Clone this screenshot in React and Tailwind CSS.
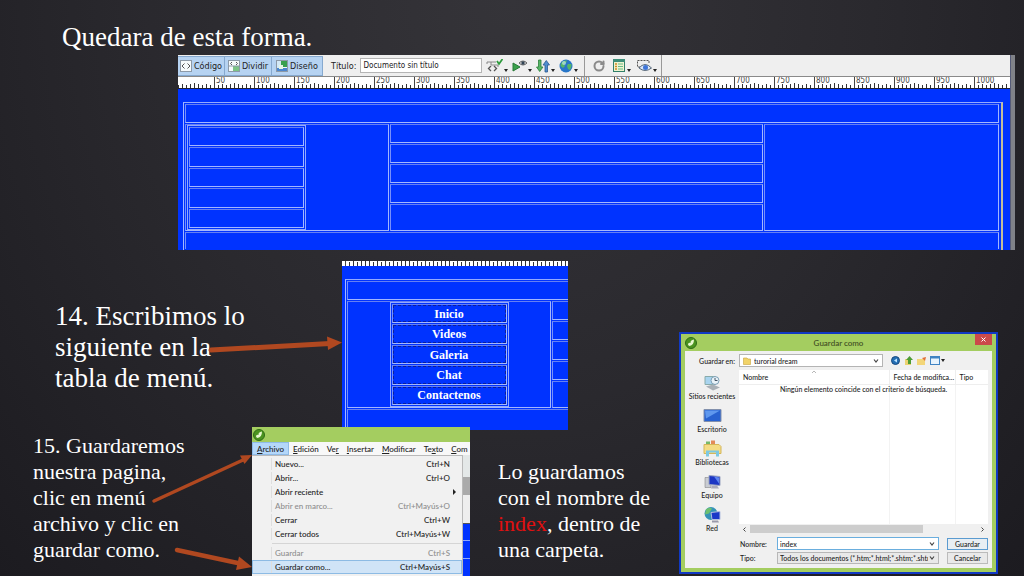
import React from 'react';
import { RotateCw } from 'lucide-react';

const RULER_LABELS = Array.from({ length: 20 }, (_, i) => (i + 1) * 50);
const MENU_BAR = [
    ['', 'A', 'rchivo'],
    ['', 'E', 'dición'],
    ['Ve', 'r', ''],
    ['', 'I', 'nsertar'],
    ['', 'M', 'odificar'],
    ['Te', 'x', 'to'],
    ['', 'C', 'om'],
];
const FILE_MENU = [
    { label: 'Nuevo...', keys: 'Ctrl+N' },
    { label: 'Abrir...', keys: 'Ctrl+O' },
    { label: 'Abrir reciente', submenu: true },
    { label: 'Abrir en marco...', keys: 'Ctrl+Mayús+O', disabled: true },
    { label: 'Cerrar', keys: 'Ctrl+W' },
    { label: 'Cerrar todos', keys: 'Ctrl+Mayús+W' },
    { separator: true },
    { label: 'Guardar', keys: 'Ctrl+S', disabled: true },
    { label: 'Guardar como...', keys: 'Ctrl+Mayús+S', active: true },
];

/* Ruler ticks: one every 5 units, longer on 25 and 50 */
const Ticks = ({ id, start }) => (
    <svg className="block w-full h-3 shrink-0" aria-hidden="true">
        <defs>
            <pattern id={id} x={start} y="0" width="40" height="12" patternUnits="userSpaceOnUse">
                <path d="M0.5 0V12" stroke="#444" />
                <path d="M4.5 8V12M8.5 7V12M12.5 8V12M16.5 7V12M20.5 6V12M24.5 7V12M28.5 8V12M32.5 7V12M36.5 8V12" stroke="#333" />
            </pattern>
        </defs>
        <rect width="100%" height="12" fill={`url(#${id})`} />
    </svg>
);

const Cell = ({ className = '', children }) => (
    <div className={`border border-t-[#6680f2] border-l-[#7890fa] border-b-[#a3b7ff] border-r-[#a3b7ff] ${className}`}>{children}</div>
);

/* Page layout shown in design view */
const PageDesign = ({ items, centered }) => (
    <div className="border border-b-0 border-t-[#94aaff] border-l-[#a3b7ff] border-r-2 border-r-[#c4bf9c] p-px pr-0.5 flex flex-col gap-px h-full">
        <Cell className="h-[19px] shrink-0" />
        <div className="flex gap-px h-[107px] shrink-0">
            <Cell className={`w-[204px] shrink-0 flex ${centered ? 'justify-center' : 'pl-px'}`}>
                <ul className="w-[119px] h-[105px] border border-[#94aaff] p-px flex flex-col gap-px">
                    {items.map((item, i) => (
                        <li
                            key={i}
                            className={`flex-1 border border-t-[#6680f2] border-l-[#7890fa] border-b-[#a3b7ff] border-r-[#a3b7ff] flex items-center justify-center font-['Liberation_Serif',serif] font-bold text-xs leading-3 text-white ${item ? 'outline-1 -outline-offset-2 outline-dashed outline-[#0a1f9c]' : ''}`}
                        >
                            {item}
                        </li>
                    ))}
                </ul>
            </Cell>
            <div className="w-[373px] shrink-0 flex flex-col gap-px">
                <Cell className="h-[19px]" />
                <Cell className="h-[19px]" />
                <Cell className="h-[19px]" />
                <Cell className="h-[19px]" />
                <Cell className="flex-1" />
            </div>
            <Cell className="flex-1" />
        </div>
        <Cell className="flex-1 border-b-0" />
    </div>
);

const Caret = () => (
    <svg width="4" height="3" viewBox="0 0 4 3" className="self-end mb-0.5" aria-hidden="true">
        <path d="M0 0H4L2 3Z" fill="#222" />
    </svg>
);

const ViewIcon = ({ kind }) => (
    <svg width="12" height="12" viewBox="0 0 12 12" aria-hidden="true">
        <rect x="0.5" y="0.5" width="11" height="11" fill="#f6fafc" stroke="#8d9aa8" />
        {kind === 'code' && <path d="M4.5 3.5L2 6L4.5 8.5M7.5 3.5L10 6L7.5 8.5" fill="none" stroke="#555" />}
        {kind === 'split' && (
            <>
                <rect x="5" y="6" width="6" height="5" fill="#7cc487" />
                <path d="M4 2L2.5 3.5L4 5M8 2L9.5 3.5L8 5" fill="none" stroke="#555" />
                <path d="M1 6H11" stroke="#8d9aa8" />
            </>
        )}
        {kind === 'design' && (
            <>
                <rect x="1" y="1" width="4" height="10" fill="#d3e8f6" />
                <path d="M5 1H11V7H5Z" fill="#39a04f" />
                <path d="M1 8H11V11H1Z" fill="#4c87cf" />
                <path d="M3 5H7V9H3Z" fill="#e4f5e4" />
            </>
        )}
    </svg>
);

const Globe = ({ size }) => (
    <svg width={size} height={size} viewBox="0 0 14 14" aria-hidden="true">
        <circle cx="7" cy="7" r="6.5" fill="#2876c8" />
        <path d="M3 3Q5 1 8 1.5L7 4L5 5L6 7L4 9L1.5 7Q1.5 4.5 3 3ZM9 5L12.5 5Q13 8 11 11L9 10L8 7Z" fill="#54b56a" />
        <circle cx="5" cy="4" r="2" fill="#d5f2ff" opacity="0.6" />
    </svg>
);

const tool = 'flex items-center gap-px h-4';

const Toolbar = () => (
    <div className="flex items-center h-[22px] shrink-0 bg-[#efefef] text-[9px] leading-3 text-[#222] border-b border-[#8a8a8a]">
        {[['code', 'Código', 'w-[47px]'], ['split', 'Dividir', 'w-[47px]'], ['design', 'Diseño', 'w-[51px]']].map(([kind, label, width]) => (
            <button key={kind} className={`h-5 ${width} flex items-center justify-center gap-0.5 bg-[#b6d3f2] border border-l-0 border-[#86a9cf]`}>
                <ViewIcon kind={kind} />
                {label}
            </button>
        ))}
        <label htmlFor="doc-title" className="ml-2 mr-1">Título:</label>
        <input id="doc-title" defaultValue="Documento sin título" className="w-[122px] h-[15px] px-0.5 bg-white border border-[#b5b5b5] text-[8px]" />
        <div className="flex items-center gap-1 ml-1">
            <button className={tool} aria-label="Validar">
                <svg width="17" height="14" viewBox="0 0 17 14">
                    <path d="M1 5V3H10M12 8V6H5V3" fill="none" stroke="#888" />
                    <path d="M5 7L2.5 9.5L5 12M8 7L10.5 9.5L8 12" fill="none" stroke="#555" strokeWidth="1.3" />
                    <path d="M11 2L13 5L16.5 0" fill="none" stroke="#2d9a3c" strokeWidth="1.8" />
                </svg>
                <Caret />
            </button>
            <button className={tool} aria-label="Comprobar navegador">
                <svg width="15" height="14" viewBox="0 0 15 14">
                    <path d="M1 4L8 8L1 12Z" fill="#3ba24c" stroke="#287a38" />
                    <path d="M7 4Q11 0 15 4Q11 8 7 4Z" fill="#ddd" stroke="#666" />
                    <circle cx="11" cy="4" r="1.7" fill="#345" />
                </svg>
                <Caret />
            </button>
            <button className={tool} aria-label="Administrar archivos">
                <svg width="14" height="14" viewBox="0 0 14 14">
                    <path d="M2.5 1H5V8H7L3.7 12.5L0.5 8H2.5Z" fill="#56b565" stroke="#2b7e3a" strokeWidth="0.8" />
                    <path d="M9 13H11.5V6H13.5L10.3 1.5L7 6H9Z" fill="#4f8ed0" stroke="#29598f" strokeWidth="0.8" />
                </svg>
                <Caret />
            </button>
            <button className={tool} aria-label="Vista previa">
                <Globe size={14} />
                <Caret />
            </button>
        </div>
        <div className="h-5 w-px bg-[#999] ml-1.5" />
        <button className="ml-2 mr-2" aria-label="Actualizar">
            <RotateCw className="w-3 h-3 text-[#8b8b8b]" strokeWidth={4} />
        </button>
        <button className={tool} aria-label="Opciones de visualización">
            <svg width="13" height="14" viewBox="0 0 13 14">
                <rect x="0.5" y="0.5" width="11" height="12" fill="#eef3d0" stroke="#32806a" />
                <rect x="0" y="0" width="12" height="3" fill="#3d8e79" />
                <path d="M2 5H4M2 7.5H4M2 10H4" stroke="#d08c20" strokeWidth="1.5" />
                <path d="M5 5H10M5 7.5H10M5 10H10" stroke="#6b8" />
            </svg>
            <Caret />
        </button>
        <button className={`${tool} ml-1.5`} aria-label="Ayudas visuales">
            <svg width="15" height="14" viewBox="0 0 15 14">
                <path d="M3 8H0.5V1.5H12V4" fill="none" stroke="#555" strokeDasharray="2 1" />
                <path d="M2 9Q8 2 14.5 9Q8 14 2 9Z" fill="#dbe8fb" stroke="#567" />
                <circle cx="8.5" cy="8.5" r="2.5" fill="#3f76d8" />
            </svg>
            <Caret />
        </button>
        <div className="h-full w-px bg-[#999] ml-1" />
    </div>
);

const DesignWindow = () => (
    <section className="ml-[178px] mr-[9px] h-[195px] flex overflow-hidden font-['DejaVu_Sans_Condensed','DejaVu_Sans',sans-serif]">
        <div className="flex-1 min-w-0 flex flex-col bg-[#0033ff]">
            <Toolbar />
            <div className="grid h-3 shrink-0 bg-white overflow-hidden border-b border-[#223]">
                <div className="col-start-1 row-start-1"><Ticks id="ruler-main" start={36} /></div>
                <div className="col-start-1 row-start-1 flex pl-[37px]">
                    {RULER_LABELS.map((n) => (
                        <span key={n} className="w-10 shrink-0 pl-px text-[8px] leading-2 text-[#444]">{n}</span>
                    ))}
                </div>
            </div>
            <div className="flex-1 min-h-0 pt-[13px] pl-[5px] pr-[7px]">
                <PageDesign items={['', '', '', '', '']} />
            </div>
        </div>
        <div className="w-[5px] bg-[#808288] border-l border-[#555b78]" />
    </section>
);

const MenuPreview = () => (
    <section className="w-[226px] h-[169px] overflow-hidden bg-[#0033ff] flex flex-col">
        <div className="h-[5px] shrink-0 bg-white overflow-hidden flex flex-col justify-end">
            <Ticks id="ruler-small" start={3} />
        </div>
        <div className="flex-1 min-h-0 pt-[13px] pl-[3px] w-[831px]">
            <PageDesign items={['Inicio', 'Videos', 'Galeria', 'Chat', 'Contactenos']} centered />
        </div>
    </section>
);

const Leaf = () => (
    <svg width="12" height="12" viewBox="0 0 12 12" aria-hidden="true">
        <circle cx="6" cy="6" r="5.5" fill="#4c9420" stroke="#2f6d16" />
        <path d="M3 8Q3 5 5.5 6Q5 3 9 2.5Q9 8 4.5 9Z" fill="#e9f7cf" />
    </svg>
);

const FileMenu = () => (
    <section className="w-[218px] h-[149px] shrink-0 overflow-hidden bg-[#f0f0f0] text-[8px] leading-3 text-[#222] font-['Lato',sans-serif] font-medium">
        <div className="h-[15px] px-px flex items-center bg-[#a4cd60]"><Leaf /></div>
        <nav className="h-[13px] flex items-center gap-2 whitespace-nowrap bg-[#f8f8f8]">
            {MENU_BAR.map(([before, key, after], i) => (
                <button key={i} className={i === 0 ? 'h-[13px] px-1 -mr-1 bg-[#b4d7fa] border border-[#8fbbe8]' : ''}>
                    {before}<u>{key}</u>{after}
                </button>
            ))}
        </nav>
        <div className="flex">
            <ul className="w-[211px] h-[121px] pt-px bg-[#f1f1f1] border-t border-r border-[#b9b9b9]">
                {FILE_MENU.map((item, i) => item.separator ? (
                    <li key={i} className="h-[5px] ml-5 flex items-center"><hr className="w-full border-[#d5d5d5]" /></li>
                ) : (
                    <li key={i}>
                        <button
                            disabled={item.disabled}
                            className={`w-full h-3.5 pr-3 flex items-center justify-between ${item.active ? 'bg-[#d0e4f7] outline-1 -outline-offset-1 outline-[#8dbbe4]' : ''} ${item.disabled ? 'text-[#8d8d8d]' : ''}`}
                        >
                            <span className="ml-[19px] pl-[3px] border-l border-[#dedede]">{item.label}</span>
                            <span>{item.keys}</span>
                            {item.submenu && <svg width="3" height="6" viewBox="0 0 3 6" className="-mr-1.5"><path d="M0 0L3 3L0 6Z" fill="#222" /></svg>}
                        </button>
                    </li>
                ))}
            </ul>
            <div className="flex-1 flex flex-col">
                <div className="h-[22px] bg-[#e4e8e8]" />
                <div className="h-[18px] bg-[#aaa]" />
                <div className="h-[29px] bg-[#eee] border-b border-[#555]" />
                <div className="flex-1 bg-[#0033ff] grid grid-rows-3 divide-y divide-[#8fa8ff]"><i /><i /><i /></div>
            </div>
        </div>
    </section>
);

const Monitor = () => (
    <>
        <path d="M2 4H8V14H2Z" fill="#c9ccd2" stroke="#777" strokeWidth="0.5" />
        <path d="M6 2L17 3V12L6 11Z" fill="#1c36c4" stroke="#9aa4c0" />
        <path d="M9 12H14L16 15H8Z" fill="#aab" />
        <path d="M11 3L16 4V10Z" fill="#5f86f0" />
    </>
);

const PLACES = [
    {
        label: 'Sitios recientes',
        icon: (
            <>
                <path d="M2 2H12V10H2Z" fill="#a8d4ef" stroke="#8aa" />
                <circle cx="12" cy="6" r="4" fill="#e8f2f8" stroke="#7b9fb5" />
                <path d="M12 3.5V6H14.5" fill="none" stroke="#456" />
                <path d="M3 12L10 10L17 13L10 16Z" fill="#a9b0b6" />
            </>
        ),
    },
    {
        label: 'Escritorio',
        icon: (
            <>
                <path d="M1 2H18V14H1Z" fill="#2862d0" stroke="#8290ac" />
                <path d="M2 3H17L3 11Z" fill="#5f98ee" />
            </>
        ),
    },
    {
        label: 'Bibliotecas',
        icon: (
            <>
                <path d="M3 1H7V5H3Z" fill="#76b96a" />
                <path d="M8 0H12V5H8Z" fill="#e38a5a" />
                <path d="M1 4H16L18 6V13H1Z" fill="#f4dc85" stroke="#d4b65a" />
                <path d="M3 16V10H16V16H13V12H6V16Z" fill="#7cc8e2" />
            </>
        ),
    },
    { label: 'Equipo', icon: <Monitor /> },
    {
        label: 'Red',
        icon: (
            <>
                <circle cx="8" cy="7" r="6.5" fill="#3593b8" />
                <path d="M3 3Q6 0 9 2L6 7L2 8Z" fill="#6dc070" />
                <path d="M8 6L17 5V13L9 13Z" fill="#1b38c8" stroke="#b4bfe0" />
                <path d="M9 14H15L16 16H9Z" fill="#99a" />
            </>
        ),
    },
];

const Chevron = () => (
    <svg width="6" height="4" viewBox="0 0 6 4" className="col-start-1 row-start-1 justify-self-end self-center mr-1 pointer-events-none" aria-hidden="true">
        <path d="M1 0.5L3 3L5 0.5" fill="none" stroke="#444" strokeWidth="1.2" />
    </svg>
);

const SaveDialog = () => (
    <section className="w-[319px] h-[242px] shrink-0 p-0.5 bg-[#1139c4] text-[7px] leading-2 text-[#222] font-['Lato',sans-serif] font-medium">
        <div className="h-full px-1 pb-1 flex flex-col bg-[#a4cd60]">
            <header className="h-[17px] shrink-0 grid grid-cols-[1fr_auto_1fr] items-center">
                <Leaf />
                <h2 className="text-[8px] text-[#3d4a20]">Guardar como</h2>
                <button aria-label="Cerrar" className="justify-self-end self-start w-[17px] h-[11px] bg-[#cb4a4a] flex items-center justify-center">
                    <svg width="5" height="5" viewBox="0 0 5 5"><path d="M0.5 0.5L4.5 4.5M4.5 0.5L0.5 4.5" stroke="#fff" /></svg>
                </button>
            </header>
            <div className="flex-1 min-h-0 flex flex-col bg-[#f0f0f0] pr-1">
                <div className="h-[19px] shrink-0 flex items-center">
                    <label htmlFor="folder" className="w-[54px] pr-1 text-right whitespace-nowrap">Guardar en:</label>
                    <div className="grid w-36 items-center">
                        <select id="folder" className="col-start-1 row-start-1 appearance-none h-[13px] pl-3.5 bg-white border border-[#b4b4b4]">
                            <option>turorial dream</option>
                        </select>
                        <svg width="8" height="8" viewBox="0 0 8 8" className="col-start-1 row-start-1 ml-1 pointer-events-none"><path d="M0.5 1H4L5 2H7.5V7.5H0.5Z" fill="#f1d368" stroke="#c9a23a" strokeWidth="0.6" /></svg>
                        <Chevron />
                    </div>
                    <div className="ml-2 flex items-center gap-1">
                        <button aria-label="Atrás"><svg width="9" height="9" viewBox="0 0 9 9"><circle cx="4.5" cy="4.5" r="4" fill="#246fb5" stroke="#17497e" /><path d="M6 2.5L3 4.5L6 6.5Z" fill="#bfe4ff" /></svg></button>
                        <button aria-label="Subir"><svg width="9" height="9" viewBox="0 0 9 9"><path d="M1 3H7V9H1Z" fill="#ecd271" /><path d="M4 8V4H2L5.5 0L9 4H7V8Z" fill="#4d9c35" /></svg></button>
                        <button aria-label="Nueva carpeta"><svg width="9" height="9" viewBox="0 0 9 9"><path d="M0 3H8V9H0Z" fill="#f3d679" /><path d="M5 2L9 1L8 5Z" fill="#e0703a" /></svg></button>
                        <button aria-label="Vistas" className="flex items-center gap-px"><svg width="10" height="9" viewBox="0 0 10 9"><rect x="0.5" y="0.5" width="9" height="8" fill="#e7f3fd" stroke="#3f83c3" /><path d="M0 1.5H10" stroke="#3f83c3" strokeWidth="2" /></svg><svg width="4" height="3" viewBox="0 0 4 3"><path d="M0 0H4L2 3Z" fill="#222" /></svg></button>
                    </div>
                </div>
                <div className="flex-1 min-h-0 flex">
                    <nav className="w-[54px] shrink-0 pt-1">
                        {PLACES.map((place) => (
                            <button key={place.label} className="w-full h-[33px] flex flex-col items-center whitespace-nowrap">
                                <svg width="19" height="18" viewBox="0 0 19 17" aria-hidden="true">{place.icon}</svg>
                                {place.label}
                            </button>
                        ))}
                    </nav>
                    <div className="flex-1 min-w-0 flex flex-col">
                        <div className="h-[154px] relative bg-white">
                            <table className="w-full h-full table-fixed text-left">
                                <thead>
                                    <tr className="h-3.5 border-b border-[#eee]">
                                        <th className="pl-1 font-medium">Nombre</th>
                                        <th className="w-[66px] pl-1 font-medium border-l border-[#eee] whitespace-nowrap">Fecha de modifica...</th>
                                        <th className="w-[33px] pl-1 font-medium border-l border-[#eee]">Tipo</th>
                                    </tr>
                                </thead>
                                <tbody>
                                    <tr><td /><td className="border-l border-[#f3f3f3]" /><td className="border-l border-[#f3f3f3]" /></tr>
                                </tbody>
                            </table>
                            <p className="absolute inset-x-0 top-[15px] text-center">Ningún elemento coincide con el criterio de búsqueda.</p>
                            <svg width="4" height="2" viewBox="0 0 4 2" className="absolute top-px left-[73px]"><path d="M0 2L2 0L4 2" fill="none" stroke="#999" strokeWidth="0.7" /></svg>
                        </div>
                        <div className="h-2 mt-px flex items-center justify-between px-1">
                            <svg width="3" height="5" viewBox="0 0 3 5"><path d="M2.5 0.5L0.5 2.5L2.5 4.5" fill="none" stroke="#444" /></svg>
                            <div className="w-[173px] h-2 ml-1 mr-auto bg-[#cdcdcd]" />
                            <svg width="3" height="5" viewBox="0 0 3 5"><path d="M0.5 0.5L2.5 2.5L0.5 4.5" fill="none" stroke="#444" /></svg>
                        </div>
                        <form className="mt-1 grid grid-cols-[37px_1fr_41px] gap-y-0.5 items-center pl-px">
                            <label htmlFor="file-name">Nombre:</label>
                            <div className="grid mr-2">
                                <input id="file-name" defaultValue="index" className="col-start-1 row-start-1 w-full h-[13px] px-0.5 bg-white border border-[#6aaede]" />
                                <Chevron />
                            </div>
                            <button type="button" className="h-3 bg-[#e8eef3] border border-[#5b9bd0]">Guardar</button>
                            <label htmlFor="file-type">Tipo:</label>
                            <div className="grid mr-2 min-w-0">
                                <select id="file-type" className="col-start-1 row-start-1 w-full min-w-0 appearance-none h-3 pl-0.5 pr-2.5 bg-[#e9e9e9] border border-[#b7b7b7]">
                                    <option>Todos los documentos (*.htm;*.html;*.shtm;*.shtml;*.hta;*.</option>
                                </select>
                                <Chevron />
                            </div>
                            <button type="button" className="h-3 bg-[#e9e9e9] border border-[#bbb]">Cancelar</button>
                        </form>
                    </div>
                </div>
            </div>
        </div>
    </section>
);

/* Callouts from the steps to the screenshots */
const Arrows = () => (
    <svg width="1024" height="576" viewBox="0 0 1024 576" className="absolute inset-0 pointer-events-none" fill="#b04820" stroke="#b04820" aria-hidden="true">
        <path d="M211 350L330 343.5" strokeWidth="5" strokeLinecap="round" />
        <path d="M327 336.5L342 342.5L328 350Z" stroke="none" />
        <path d="M154 501L243 460" strokeWidth="3.5" strokeLinecap="round" />
        <path d="M240 455.5L252 455L244.5 464Z" stroke="none" />
        <path d="M177 550L240 563.5" strokeWidth="4.5" strokeLinecap="round" />
        <path d="M239 556.5L252 567L236 570Z" stroke="none" />
    </svg>
);

export default function App() {
    return (
        <main className="relative min-h-screen overflow-hidden bg-[radial-gradient(ellipse_at_50%_0%,#353439_0%,#2a292e_50%,#1c1b20_100%)] text-white font-['Liberation_Serif',serif]">
            <h1 className="pt-[21px] pl-[62px] h-[55px] text-[27px] leading-8">Quedara de esta forma.</h1>
            <DesignWindow />
            <div className="flex items-start mt-[11px]">
                <div className="flex-1 min-w-0">
                    <div className="flex">
                        <p className="w-[342px] shrink-0 pl-[55px] pt-10 text-[27px] leading-[31px]">
                            14. Escribimos lo<br />siguiente en la<br />tabla de menú.
                        </p>
                        <MenuPreview />
                    </div>
                    <div className="relative flex -mt-[3px]">
                        <p className="w-[252px] shrink-0 pl-[33px] pt-1.5 text-[22px] leading-[26px]">
                            15. Guardaremos<br />nuestra pagina,<br />clic en menú<br />archivo y clic en<br />guardar como.
                        </p>
                        <FileMenu />
                        <p className="pl-7 pt-8 text-[22px] leading-[26px] whitespace-nowrap">
                            Lo guardamos<br />con el nombre de<br /><span className="text-[#e01010]">index</span>, dentro de<br />una carpeta.
                        </p>
                    </div>
                </div>
                <div className="mt-[71px] mr-[26px]">
                    <SaveDialog />
                </div>
            </div>
            <Arrows />
        </main>
    );
}
